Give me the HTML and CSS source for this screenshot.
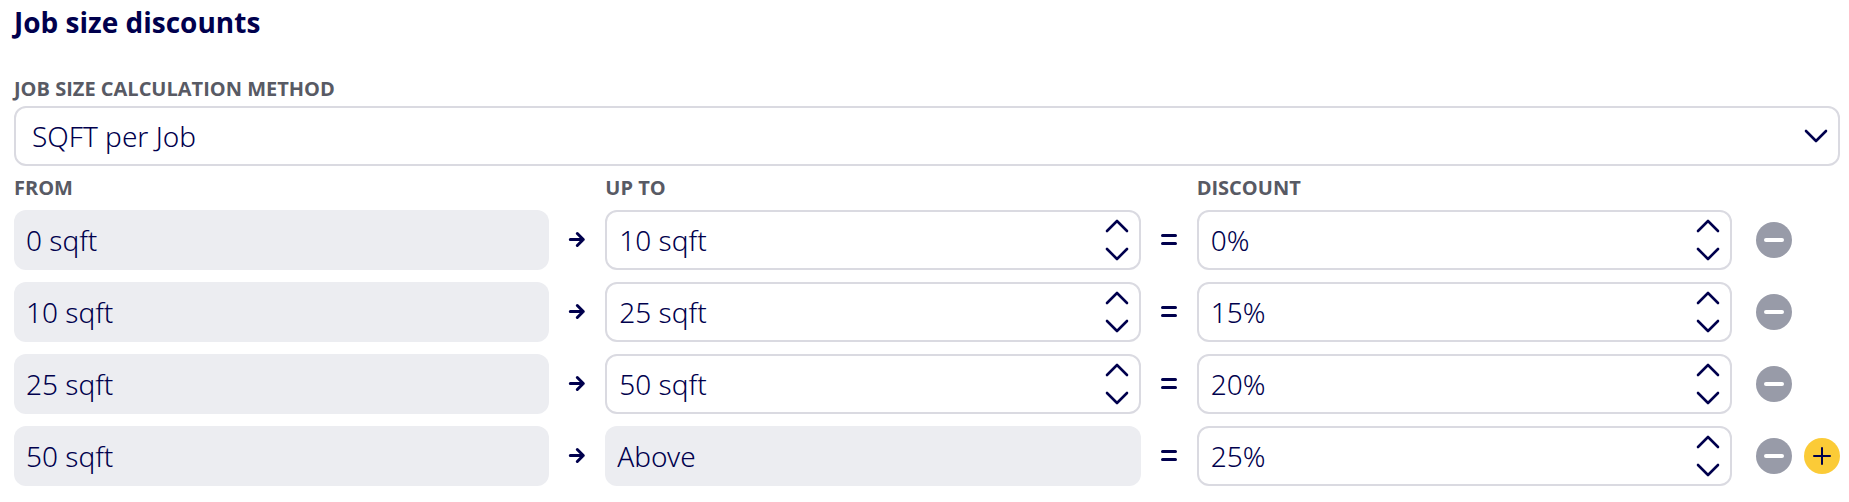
FILE: index.html
```html
<!DOCTYPE html>
<html lang="en">
<head>
    <meta charset="UTF-8">
    <meta name="viewport" content="width=device-width, initial-scale=1.0">
    <title>Job size discounts</title>
    <link rel="stylesheet" href="styles.css">
</head>
<body>

<!-- shared icons -->
<svg class="sprite" aria-hidden="true">
    <symbol id="icon-up" viewBox="0 0 24 14"><path d="M2 12L12 2L22 12"/></symbol>
    <symbol id="icon-down" viewBox="0 0 24 14"><path d="M2 2L12 12L22 2"/></symbol>
    <symbol id="icon-arrow" viewBox="0 0 18 18"><path d="M2.300 8.500H15.200M9.300 2.500L15.300 8.500L9.300 14.500"/></symbol>
    <symbol id="icon-equals" viewBox="0 0 18 18"><path d="M2.500 4.500H15.500M2.500 12.500H15.500"/></symbol>
    <symbol id="icon-minus" viewBox="0 0 36 36"><path d="M10 18H26"/></symbol>
    <symbol id="icon-plus" viewBox="0 0 36 36"><path d="M10 18H26M18 10V26"/></symbol>
</svg>

<form class="discounts">
    <h1 class="title">Job size discounts</h1>

    <label class="label" for="method">Job size calculation method</label>
    <div class="select">
        <select id="method">
            <option>SQFT per Job</option>
        </select>
        <svg class="chevron"><use href="#icon-down"/></svg>
    </div>

    <div class="row header">
        <label class="label" for="from-1">From</label>
        <span></span>
        <label class="label" for="to-1">Up to</label>
        <span></span>
        <label class="label" for="discount-1">Discount</label>
    </div>

    <div class="row">
        <input class="field readonly" id="from-1" type="text" value="0 sqft" readonly>
        <svg class="sign"><use href="#icon-arrow"/></svg>
        <div class="field stepper">
            <input id="to-1" type="text" value="10 sqft">
            <div class="steps">
                <button type="button" aria-label="Increase"><svg class="chevron"><use href="#icon-up"/></svg></button>
                <button type="button" aria-label="Decrease"><svg class="chevron"><use href="#icon-down"/></svg></button>
            </div>
        </div>
        <svg class="sign"><use href="#icon-equals"/></svg>
        <div class="field stepper">
            <input id="discount-1" type="text" value="0%">
            <div class="steps">
                <button type="button" aria-label="Increase"><svg class="chevron"><use href="#icon-up"/></svg></button>
                <button type="button" aria-label="Decrease"><svg class="chevron"><use href="#icon-down"/></svg></button>
            </div>
        </div>
        <div class="actions">
            <button class="round remove" type="button" aria-label="Remove row"><svg><use href="#icon-minus"/></svg></button>
        </div>
    </div>

    <div class="row">
        <input class="field readonly" type="text" value="10 sqft" aria-label="From" readonly>
        <svg class="sign"><use href="#icon-arrow"/></svg>
        <div class="field stepper">
            <input type="text" value="25 sqft" aria-label="Up to">
            <div class="steps">
                <button type="button" aria-label="Increase"><svg class="chevron"><use href="#icon-up"/></svg></button>
                <button type="button" aria-label="Decrease"><svg class="chevron"><use href="#icon-down"/></svg></button>
            </div>
        </div>
        <svg class="sign"><use href="#icon-equals"/></svg>
        <div class="field stepper">
            <input type="text" value="15%" aria-label="Discount">
            <div class="steps">
                <button type="button" aria-label="Increase"><svg class="chevron"><use href="#icon-up"/></svg></button>
                <button type="button" aria-label="Decrease"><svg class="chevron"><use href="#icon-down"/></svg></button>
            </div>
        </div>
        <div class="actions">
            <button class="round remove" type="button" aria-label="Remove row"><svg><use href="#icon-minus"/></svg></button>
        </div>
    </div>

    <div class="row">
        <input class="field readonly" type="text" value="25 sqft" aria-label="From" readonly>
        <svg class="sign"><use href="#icon-arrow"/></svg>
        <div class="field stepper">
            <input type="text" value="50 sqft" aria-label="Up to">
            <div class="steps">
                <button type="button" aria-label="Increase"><svg class="chevron"><use href="#icon-up"/></svg></button>
                <button type="button" aria-label="Decrease"><svg class="chevron"><use href="#icon-down"/></svg></button>
            </div>
        </div>
        <svg class="sign"><use href="#icon-equals"/></svg>
        <div class="field stepper">
            <input type="text" value="20%" aria-label="Discount">
            <div class="steps">
                <button type="button" aria-label="Increase"><svg class="chevron"><use href="#icon-up"/></svg></button>
                <button type="button" aria-label="Decrease"><svg class="chevron"><use href="#icon-down"/></svg></button>
            </div>
        </div>
        <div class="actions">
            <button class="round remove" type="button" aria-label="Remove row"><svg><use href="#icon-minus"/></svg></button>
        </div>
    </div>

    <!-- last row is open ended -->
    <div class="row">
        <input class="field readonly" type="text" value="50 sqft" aria-label="From" readonly>
        <svg class="sign"><use href="#icon-arrow"/></svg>
        <input class="field readonly" type="text" value="Above" aria-label="Up to" readonly>
        <svg class="sign"><use href="#icon-equals"/></svg>
        <div class="field stepper">
            <input type="text" value="25%" aria-label="Discount">
            <div class="steps">
                <button type="button" aria-label="Increase"><svg class="chevron"><use href="#icon-up"/></svg></button>
                <button type="button" aria-label="Decrease"><svg class="chevron"><use href="#icon-down"/></svg></button>
            </div>
        </div>
        <div class="actions">
            <button class="round remove" type="button" aria-label="Remove row"><svg><use href="#icon-minus"/></svg></button>
            <button class="round add" type="button" aria-label="Add row"><svg><use href="#icon-plus"/></svg></button>
        </div>
    </div>
</form>

</body>
</html>
```
FILE: styles.css
```css
* {
    box-sizing: border-box;
}

body {
    margin: 0;
    background-color: #fff;
    color: #00004d;
    font-family: "Open Sans", "Noto Sans", sans-serif;
}

.sprite {
    display: none;
}

.discounts {
    padding: 4px 9px 20px 14px;
}

.title {
    margin: 0 0 37px;
    font-size: 28px;
    line-height: 36px;
    font-weight: 700;
}

.label {
    display: block;
    color: #585a64;
    font-size: 20px;
    line-height: 24px;
    font-weight: 700;
    text-transform: uppercase;
}

input,
select {
    width: 100%;
    height: 100%;
    margin: 0;
    border: none;
    background: transparent;
    color: inherit;
    font: inherit;
    outline: none;
    appearance: none;
}

button {
    padding: 0;
    border: none;
    background: transparent;
    color: inherit;
    cursor: pointer;
}

svg {
    display: block;
    fill: none;
    stroke: currentColor;
    stroke-width: 2;
    stroke-linecap: round;
    stroke-linejoin: round;
}

.select,
.field {
    height: 60px;
    border: 2px solid #dadae1;
    border-radius: 12px;
    font-family: "Noto Sans", "Open Sans", sans-serif;
    font-size: 28px;
    font-weight: 300;
}

.select {
    display: grid;
    align-items: center;
    margin: 5px 0 10px;
}

.select select,
.select .chevron {
    grid-area: 1 / 1;
}

.select select {
    padding: 0 48px 0 16px;
}

.select .chevron {
    justify-self: end;
    margin-right: 10px;
    pointer-events: none;
}

.chevron {
    width: 24px;
    height: 14px;
    stroke-width: 2.6;
}

.row {
    display: grid;
    grid-template-columns: 1fr 56px 1fr 56px 1fr 108px;
    align-items: center;
    margin-bottom: 12px;
}

.header {
    margin-bottom: 10px;
}

.field.readonly {
    padding: 0 12px;
    border: none;
    background-color: #ecedf1;
}

.stepper {
    display: flex;
    align-items: center;
}

.stepper input {
    flex: 1;
    min-width: 0;
    padding: 0 12px;
}

.steps {
    display: flex;
    flex-direction: column;
    gap: 14px;
    padding-right: 10px;
}

.steps button {
    display: block;
}

.sign {
    width: 18px;
    height: 18px;
    justify-self: center;
    stroke-width: 3;
}

.actions {
    display: flex;
    gap: 12px;
    padding-left: 24px;
}

.round {
    width: 36px;
    height: 36px;
    border-radius: 50%;
}

.round svg {
    width: 36px;
    height: 36px;
}

.remove {
    background-color: #989ba8;
    color: #fff;
}

.remove svg {
    stroke-width: 4;
}

.add {
    background-color: #fbcb37;
}
```
